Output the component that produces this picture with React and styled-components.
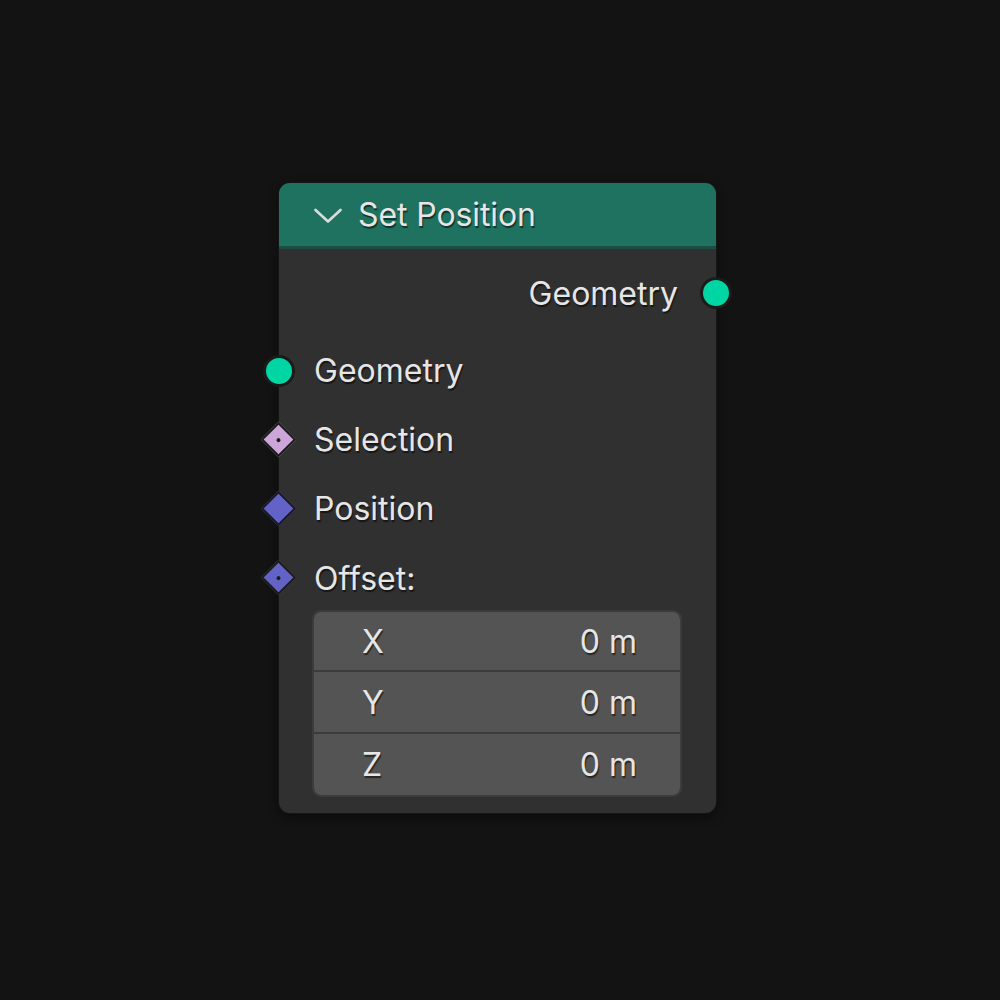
import React from "react";
import styled, { createGlobalStyle } from "styled-components";

const Global = createGlobalStyle`
  html, body { margin: 0; padding: 0; background: #131313; }
  body { font-family: Inter, "Noto Sans", "DejaVu Sans", sans-serif; }
`;

const Canvas = styled.div`
  width: 1000px;
  height: 1000px;
  box-sizing: border-box;
  padding: 183px 0 0 279px;
  background: #131313;
`;

const Node = styled.div`
  position: relative;
  width: 437px;
  border-radius: 11px;
  background: #303030;
  box-shadow: 0 0 0 1px #161616, 0 4px 12px rgba(0, 0, 0, 0.45);
  color: #e6e6e6;
  font-size: 32px;
  text-shadow: 1px 2px 1px rgba(0, 0, 0, 0.55);
`;

const Header = styled.div`
  display: flex;
  align-items: center;
  height: 63px;
  padding-left: 35px;
  background: #1f7260;
  border-bottom: 3px solid #1b4d42;
  border-radius: 11px 11px 0 0;
`;

const Chevron = styled.svg`
  width: 28px;
  height: 16px;
  margin-right: 16px;
  margin-top: 2px;
  overflow: visible;
`;

const Title = styled.span`
  letter-spacing: -0.1px;
`;

const Body = styled.div`
  display: flex;
  flex-direction: column;
  padding: 10px 0 16px;
`;

const Row = styled.div`
  position: relative;
  box-sizing: border-box;
  display: flex;
  align-items: ${(p) => (p.$top ? "flex-start" : "center")};
  justify-content: ${(p) => (p.$out ? "flex-end" : "flex-start")};
  height: ${(p) => p.$h || 69}px;
  padding: ${(p) =>
    p.$out ? "0 38px 0 0" : `${p.$top || 0}px 0 0 35px`};
  margin-bottom: ${(p) => p.$mb || 0}px;
`;

const Socket = styled.span`
  position: absolute;
  top: 50%;
  ${(p) => (p.$out ? "right: -16px;" : "left: -16px;")}
  width: 26px;
  height: 26px;
  margin-top: -16px;
  border-radius: 50%;
  background: ${(p) => p.$color};
  border: 3px solid #1b1b1b;
`;

const Diamond = styled.span`
  position: absolute;
  top: ${(p) => (p.$y ? `${p.$y}px` : "50%")};
  left: -13px;
  width: 21px;
  height: 21px;
  margin-top: -13px;
  transform: rotate(45deg);
  background: ${(p) => p.$color};
  border: 2.5px solid #1b1b1b;
  display: flex;
  align-items: center;
  justify-content: center;

  &::after {
    content: "";
    display: ${(p) => (p.$dot ? "block" : "none")};
    width: 4px;
    height: 4px;
    border-radius: 50%;
    background: #1b1b1b;
  }
`;

const Vector = styled.div`
  display: flex;
  flex-direction: column;
  gap: 2px;
  margin: 0 34px 0 33px;
  background: #3c3c3c;
  border: 2px solid #3c3c3c;
  border-radius: 9px;
  overflow: hidden;
`;

const Field = styled.div`
  display: flex;
  align-items: center;
  justify-content: space-between;
  height: ${(p) => p.$h}px;
  padding: 0 43px 0 48px;
  background: #545454;
  border-radius: ${(p) => p.$r};
`;

const TEAL = "#00d6a3";
const LILAC = "#cca6d8";
const BLUE = "#6363c7";

export default function App() {
  return (
    <>
      <Global />
      <Canvas>
        <Node>
          <Header>
            <Chevron viewBox="0 0 28 16">
              <path
                d="M1.5 2 L14 13.5 L26.5 2"
                fill="none"
                stroke="#dcdcdc"
                strokeWidth="2.6"
                strokeLinecap="round"
                strokeLinejoin="round"
              />
            </Chevron>
            <Title>Set Position</Title>
          </Header>
          <Body>
            <Row $out $h={68} $mb={9}>
              Geometry
              <Socket $out $color={TEAL} />
            </Row>
            <Row>
              <Socket $color={TEAL} />
              Geometry
            </Row>
            <Row>
              <Diamond $color={LILAC} $dot />
              Selection
            </Row>
            <Row>
              <Diamond $color={BLUE} />
              Position
            </Row>
            <Row $h={67} $top={16}>
              <Diamond $color={BLUE} $dot $y={35} />
              Offset:
            </Row>
            <Vector>
              <Field $h={58} $r="7px 7px 0 0">
                <span>X</span>
                <span>0 m</span>
              </Field>
              <Field $h={60} $r="0">
                <span>Y</span>
                <span>0 m</span>
              </Field>
              <Field $h={61} $r="0 0 7px 7px">
                <span>Z</span>
                <span>0 m</span>
              </Field>
            </Vector>
          </Body>
        </Node>
      </Canvas>
    </>
  );
}
